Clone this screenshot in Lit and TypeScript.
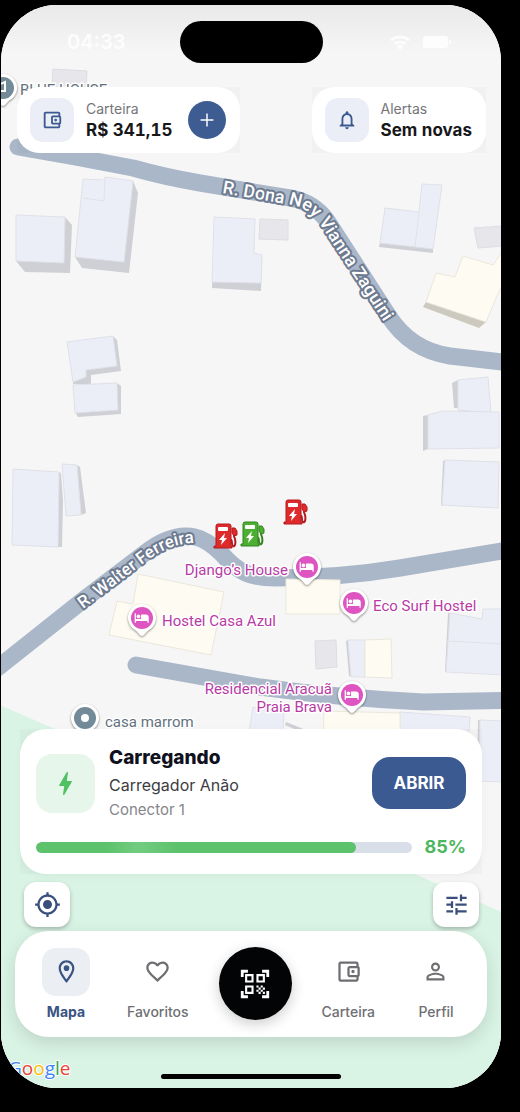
import { LitElement, html, svg, css } from "lit";
import { customElement, property } from "lit/decorators.js";
import { classMap } from "lit/directives/class-map.js";

const ICONS: Record<string, string> = {
  wallet:
    "M21 7.28V5c0-1.1-.9-2-2-2H5c-1.11 0-2 .9-2 2v14c0 1.1.89 2 2 2h14c1.1 0 2-.9 2-2v-2.28c.59-.35 1-.98 1-1.72V9c0-.74-.41-1.37-1-1.72zM20 9v6h-7V9h7zM5 19V5h14v2h-6c-1.1 0-2 .9-2 2v6c0 1.1.9 2 2 2h6v2H5zM16 10.5a1.5 1.5 0 1 1 0 3a1.5 1.5 0 1 1 0-3z",
  bell:
    "M12 22c1.1 0 2-.9 2-2h-4c0 1.1.9 2 2 2zm6-6v-5c0-3.07-1.63-5.64-4.5-6.32V4c0-.83-.67-1.5-1.5-1.5s-1.5.67-1.5 1.5v.68C7.64 5.36 6 7.92 6 11v5l-2 2v1h16v-1l-2-2zm-2 1H8v-6c0-2.48 1.51-4.5 4-4.5s4 2.02 4 4.5v6z",
  plus: "M19 12.800h-6.200v6.200h-1.600v-6.200H5v-1.600h6.200V5h1.600v6.200H19v1.600z",
  pin:
    "M12 2C8.13 2 5 5.13 5 9c0 5.25 7 13 7 13s7-7.75 7-13c0-3.87-3.13-7-7-7zM7 9c0-2.76 2.24-5 5-5s5 2.24 5 5c0 2.88-2.88 7.19-5 9.88C9.92 16.21 7 11.85 7 9zM12 6.5a2.5 2.5 0 1 1 0 5a2.5 2.5 0 1 1 0-5z",
  heart:
    "M16.5 3c-1.74 0-3.41.81-4.5 2.09C10.91 3.81 9.24 3 7.5 3 4.42 3 2 5.42 2 8.5c0 3.78 3.4 6.86 8.55 11.54L12 21.35l1.45-1.32C18.6 15.36 22 12.28 22 8.5 22 5.42 19.58 3 16.5 3zm-4.4 15.55l-.1.1-.1-.1C7.14 14.24 4 11.39 4 8.5 4 6.5 5.5 5 7.5 5c1.54 0 3.04.99 3.57 2.36h1.87C13.46 5.99 14.96 5 16.5 5c2 0 3.5 1.5 3.5 3.5 0 2.89-3.14 5.74-7.9 10.05z",
  qr:
    "M9.5 6.5v3h-3v-3h3M11 5H5v6h6V5zm-1.5 9.5v3h-3v-3h3M11 13H5v6h6v-6zm6.5-6.5v3h-3v-3h3M19 5h-6v6h6V5zm-6 8h1.5v1.5H13V13zm1.5 1.5H16V16h-1.5v-1.5zM16 13h1.5v1.5H16V13zm-3 3h1.5v1.5H13V16zm1.5 1.5H16V19h-1.5v-1.5zM16 16h1.5v1.5H16V16zm1.5-1.5H19V16h-1.5v-1.5zm0 3H19V19h-1.5v-1.5zM22 7h-2V4h-3V2h5v5zm0 15v-5h-2v3h-3v2h5zM2 22h5v-2H4v-3H2v5zM2 2v5h2V4h3V2H2z",
  person:
    "M12 5.9c1.16 0 2.1.94 2.1 2.1s-.94 2.1-2.1 2.1S9.9 9.16 9.9 8s.94-2.1 2.1-2.1m0 9c2.97 0 6.1 1.46 6.1 2.1v1.1H5.9V17c0-.64 3.13-2.1 6.1-2.1M12 4C9.79 4 8 5.79 8 8s1.79 4 4 4 4-1.79 4-4-1.79-4-4-4zm0 9c-2.67 0-8 1.34-8 4v3h16v-3c0-2.66-5.33-4-8-4z",
  locate:
    "M12 8c-2.21 0-4 1.79-4 4s1.79 4 4 4 4-1.79 4-4-1.79-4-4-4zm8.94 3c-.46-4.17-3.77-7.48-7.94-7.94V1h-2v2.06C6.83 3.52 3.52 6.83 3.06 11H1v2h2.06c.46 4.17 3.77 7.48 7.94 7.94V23h2v-2.06c4.17-.46 7.48-3.77 7.94-7.94H23v-2h-2.06zM12 19c-3.87 0-7-3.13-7-7s3.13-7 7-7 7 3.13 7 7-3.13 7-7 7z",
  tune:
    "M3 17v2h6v-2H3zM3 5v2h10V5H3zm10 16v-2h8v-2h-8v-2h-2v6h2zM7 9v2H3v2h4v2h2V9H7zm14 4v-2H11v2h10zm-6-4h2V7h4V5h-4V3h-2v6z",
  bolt:
    "M10.67 21c-.35 0-.62-.31-.57-.66L11 14H7.5c-.88 0-.33-.75-.31-.78 1.26-2.23 3.15-5.53 5.65-9.93.1-.18.3-.29.5-.29.35 0 .62.31.57.66L13 10h3.51c.4 0 .62.19.4.66-3.29 5.74-5.2 9.09-5.75 10.05-.1.18-.29.29-.5.29z",
};

const BED =
  "M7 13c1.66 0 3-1.34 3-3S8.66 7 7 7s-3 1.34-3 3 1.34 3 3 3zm12-6h-8v7H3V5H1v15h2v-3h18v3h2v-9c0-2.21-1.79-4-4-4z";

@customElement("md-icon")
class MdIcon extends LitElement {
  @property() name = "";
  @property({ type: Number }) size = 24;

  static styles = css`
    :host {
      display: flex;
    }
    .glyph {
      display: block;
      fill: currentColor;
    }
  `;

  render() {
    return html`<svg class="glyph" width=${this.size} height=${this.size} viewBox="0 0 24 24" aria-hidden="true">
      <path d=${ICONS[this.name] ?? ""}></path>
    </svg>`;
  }
}

type Roof = { kind: "blue" | "yellow" | "grey"; roof: string; wall?: string };

const BUILDINGS: Roof[] = [
  { kind: "grey", roof: "53,69 87,71 86,90 52,88" },
  { kind: "blue", wall: "65,217 72,225 70,273 25,272 16,261", roof: "16,215 65,217 64,263 16,261" },
  { kind: "blue", wall: "133,181 138,193 129,273 82,268 75,257", roof: "83,179 104,180 105,177 133,181 124,262 75,257 81,199" },
  { kind: "blue", wall: "262,255 261,291 212,288 212,280", roof: "214,217 255,219 254,253 262,255 261,283 212,282" },
  { kind: "grey", roof: "260,219 288,220 288,240 259,239" },
  { kind: "blue", wall: "113,336 117,340 121,371 91,375 91,384 73,384 73,381 86,370", roof: "67,342 113,336 117,366 86,370 86,377 73,382" },
  { kind: "blue", wall: "117,383 121,386 121,414 78,417 75,412", roof: "73,385 117,383 118,410 75,413" },
  { kind: "blue", wall: "380,242 433,248 433,253 379,247", roof: "385,208 419,212 422,184 442,185 433,249 380,243" },
  { kind: "grey", roof: "474,228 503,226 503,246 478,248" },
  { kind: "yellow", wall: "426,302 486,322 479,328 423,307", roof: "463,256 493,265 503,250 503,285 499,291 486,322 426,302 436,273 455,277" },
  { kind: "blue", wall: "458,380 452,383 454,408 458,408", roof: "458,380 488,377 491,413 458,410" },
  { kind: "blue", wall: "428,415 423,416 423,451 428,449", roof: "428,415 442,411 499,412 499,448 428,449" },
  { kind: "blue", wall: "445,460 443,461 441,505 443,506", roof: "445,460 499,462 498,508 442,505" },
  { kind: "blue", wall: "77,465 80,467 86,513 81,515", roof: "62,464 77,465 81,515 66,516" },
  { kind: "blue", wall: "59,472 61,473 63,500 62,547 58,547", roof: "13,469 59,472 58,547 12,545" },
  { kind: "yellow", roof: "138,574 224,592 211,655 109,635 117,601 133,604" },
  { kind: "yellow", roof: "286,579 340,580 340,614 286,614" },
  { kind: "grey", roof: "315,641 336,640 337,667 316,669" },
  { kind: "blue", wall: "348,640 346,641 349,676 351,677", roof: "348,640 365,640 365,677 351,677" },
  { kind: "yellow", roof: "365,640 391,639 392,678 365,677" },
  { kind: "blue", wall: "450,613 448,613 445,672 447,672", roof: "450,613 482,619 483,609 503,609 503,675 446,672" },
  { kind: "blue", roof: "253,707 284,713 282,745 247,745" },
  { kind: "blue", roof: "400,712 470,717 468,745 400,745" },
  { kind: "yellow", roof: "324,711 400,713 400,745 323,745" },
  { kind: "blue", wall: "480,720 478,720 477,782 479,782", roof: "480,720 503,721 503,782 479,781" },
];

const LODGINGS = [
  { x: 307, y: 567 },
  { x: 354, y: 603 },
  { x: 352, y: 695 },
  { x: 142, y: 618 },
];

const LABELS = [
  { x: 288, y: 575, end: true, text: "Django’s House" },
  { x: 162, y: 626, end: false, text: "Hostel Casa Azul" },
  { x: 373, y: 611, end: false, text: "Eco Surf Hostel" },
  { x: 332, y: 694, end: true, text: "Residencial Aracuã" },
  { x: 332, y: 712, end: true, text: "Praia Brava" },
];

const CHARGERS = [
  { x: 213, y: 523, busy: true },
  { x: 240, y: 521, busy: false },
  { x: 283, y: 499, busy: true },
];

@customElement("street-map")
class StreetMap extends LitElement {
  static styles = css`
    :host {
      display: block;
    }
    .canvas {
      display: block;
      width: 100%;
      height: 100%;
      background: #f6f6f6;
    }
    .park {
      fill: #d9f4e4;
    }
    .road {
      fill: none;
      stroke: #a9b7c9;
      stroke-width: 17;
      stroke-linecap: round;
      stroke-linejoin: round;
    }
    .blue {
      fill: #eceef7;
      stroke: #e0e1e8;
    }
    .yellow {
      fill: #fefcf2;
      stroke: #ebe7dc;
    }
    .grey {
      fill: #e7e7eb;
      stroke: #dddde2;
    }
    .wall {
      fill: #cfd0d5;
    }
    .wall-yellow {
      fill: #ccc9be;
    }
    .street {
      font: 500 17px Roboto, "Liberation Sans", sans-serif;
      fill: #fff;
      stroke: #6d7a90;
      stroke-width: 4;
      stroke-linejoin: round;
      paint-order: stroke;
    }
    .avenue {
      font-size: 18px;
    }
    .place {
      font: 400 15px Inter, "Liberation Sans", sans-serif;
      fill: #b93aa6;
      stroke: #fff;
      stroke-width: 3;
      stroke-linejoin: round;
      paint-order: stroke;
    }
    .place {
      font-family: Roboto, "Liberation Sans", sans-serif;
    }
    .muted {
      fill: #63727e;
    }
    .end {
      text-anchor: end;
    }
    .bubble {
      fill: #fff;
      filter: drop-shadow(0 1px 1px rgba(0, 0, 0, 0.45));
    }
    .lodging {
      fill: #de54c1;
    }
    .spot {
      fill: #738b98;
    }
    .white {
      fill: #fff;
    }
    .cap {
      fill: none;
      stroke: #fff;
      stroke-width: 2;
    }
    .pump-red {
      fill: #df2a2c;
      stroke: #b31b20;
    }
    .pump-green {
      fill: #4cae32;
      stroke: #33851f;
    }
    .hose {
      fill: none;
      stroke-width: 2;
      stroke-linecap: round;
    }
    .brand {
      font: 400 19px "Open Sans", "Noto Sans", sans-serif;
      stroke: #fff;
      stroke-width: 2;
      paint-order: stroke;
    }
    .g-blue {
      fill: #4285f4;
    }
    .g-red {
      fill: #ea4335;
    }
    .g-yellow {
      fill: #fbbc05;
    }
    .g-green {
      fill: #34a853;
    }
  `;

  private bubble(x: number, y: number) {
    return svg`<path class="bubble" d="M${x} ${y + 18}c-2 0-3-3-7-6a14 14 0 1 1 14 0c-4 3-5 6-7 6z"></path>`;
  }

  private charger(x: number, y: number, busy: boolean) {
    const tone = busy ? "pump-red" : "pump-green";
    return svg`<g transform="translate(${x} ${y})">
      <path class="${tone} hose" d="M17 17c3-1 1 5 3 6s3-3 2-7l-1-3V7"></path>
      <path class=${tone} d="M19 5l3 0 2 3v4l-3 1-2-3z"></path>
      <path class=${tone} d="M3 23V3q0-2 2-2h11q2 0 2 2v20h1v2H1v-2z"></path>
      <rect class="white" x="5" y="4" width="10" height="4" rx="1"></rect>
      <path class="white" d="M12 10l-6 7h3l-1 5 6-7h-3z"></path>
    </g>`;
  }

  render() {
    return html`<svg class="canvas" viewBox="1 5 500 1083" preserveAspectRatio="xMidYMid slice" role="img" aria-label="Mapa">
      <path class="park" d="M0 705L50 727L417 875L520 920V1100H0z"></path>
      <path class="road" d="M18 147L75 157L133 168Q165 177 200 183L290 198Q314 202 328 222L388 315Q410 350 450 356L520 364"></path>
      <path class="road" d="M136 665L260 687Q340 698 423 702L520 700"></path>
      <path class="road" d="M-10 674L82 601L145 553Q172 532 195 537Q208 540 222 554C238 573 252 578 275 578Q340 578 400 568L520 548"></path>
      ${BUILDINGS.map(
        (b) => svg`
          ${b.wall ? svg`<polygon class=${b.kind === "yellow" ? "wall-yellow" : "wall"} points=${b.wall}></polygon>` : ""}
          <polygon class=${b.kind} points=${b.roof}></polygon>`,
      )}
      <path class="blue" d="M83 198L104 201L105 178M419 212L415 247M447 641L503 644"></path>
      <path class="wall" d="M286 722L306 730V734L285 725z"></path>

      <path id="dona" fill="none" d="M222 193L292 205Q308 208 320 224L386 325L404 350"></path>
      <path id="walter" fill="none" d="M83 609L148 560Q173 541 202 543L222 548"></path>
      <text class="street avenue"><textPath href="#dona">R. Dona Ney Vianna Zaguini</textPath></text>
      <text class="street"><textPath href="#walter">R. Walter Ferreira</textPath></text>

      ${this.bubble(3, 88)}
      <circle class="spot" cx="3" cy="88" r="11"></circle>
      <path class="cap" d="M-4 86l9-4v9h-6"></path>
      <text class="place muted" x="20" y="95">BLUE HOUSE</text>

      ${this.bubble(85, 718)}
      <circle class="spot" cx="85" cy="718" r="11"></circle>
      <circle class="white" cx="85" cy="718" r="4"></circle>
      <text class="place muted" x="105" y="727">casa marrom</text>

      ${LABELS.map((l) => svg`<text class="place ${l.end ? "end" : ""}" x=${l.x} y=${l.y}>${l.text}</text>`)}
      ${LODGINGS.map(
        (p) => svg`${this.bubble(p.x, p.y)}
          <circle class="lodging" cx=${p.x} cy=${p.y} r="11"></circle>
          <path class="white" transform="translate(${p.x - 8} ${p.y - 8}) scale(.64)" d=${BED}></path>`,
      )}
      ${CHARGERS.map((c) => this.charger(c.x, c.y, c.busy))}
      <text class="brand" x="8" y="1075"><tspan class="g-blue">G</tspan><tspan class="g-red">o</tspan><tspan class="g-yellow">o</tspan><tspan class="g-blue">g</tspan><tspan class="g-green">l</tspan><tspan class="g-red">e</tspan></text>
    </svg>`;
  }
}

const TABS_LEFT = [
  { icon: "pin", label: "Mapa", active: true },
  { icon: "heart", label: "Favoritos", active: false },
];
const TABS_RIGHT = [
  { icon: "wallet", label: "Carteira", active: false },
  { icon: "person", label: "Perfil", active: false },
];

@customElement("app-root")
class AppRoot extends LitElement {
  @property({ type: Number }) charge = 85;

  static styles = css`
    :host {
      display: flex;
      box-sizing: border-box;
      min-height: 100vh;
      padding: 5px 19px 24px 1px;
      background: #000;
      font-family: Inter, "Liberation Sans", sans-serif;
      color: #1b1b1f;
    }
    * {
      box-sizing: border-box;
    }
    button {
      border: 0;
      padding: 0;
      font: inherit;
      color: inherit;
      cursor: pointer;
    }
    .phone {
      position: relative;
      flex: 1;
      display: flex;
      flex-direction: column;
      overflow: hidden;
      border-radius: 56px;
      background: #f6f6f6;
    }
    .map {
      position: absolute;
      inset: 0;
    }
    .screen {
      position: relative;
      flex: 1;
      display: flex;
      flex-direction: column;
    }
    .status {
      display: grid;
      grid-template-columns: 1fr auto 1fr;
      align-items: center;
      padding: 16px 0 24px;
      background: linear-gradient(#e9e9e9, rgba(246, 246, 246, 0) 48px);
    }
    .time {
      padding-left: 12px;
      text-align: center;
      font-size: 20px;
      font-weight: 600;
      line-height: 24px;
      color: #fdfdfd;
    }
    .island {
      width: 143px;
      height: 42px;
      border-radius: 21px;
      background: #000;
    }
    .signals {
      display: flex;
      justify-content: center;
      align-items: center;
      gap: 12px;
      padding-left: 16px;
    }
    .signal {
      display: block;
      fill: #fdfdfd;
    }
    .top {
      display: flex;
      justify-content: space-between;
      padding: 0 15px 0 16px;
    }
    .halo {
      background: rgba(0, 0, 0, 0.02);
    }
    .chip {
      display: flex;
      align-items: center;
      gap: 12px;
      padding: 11px 14px 11px 13px;
      border-radius: 22px;
      background: #fff;
    }
    .tile {
      display: flex;
      align-items: center;
      justify-content: center;
      width: 44px;
      height: 44px;
      border-radius: 13px;
      background: #ebeef6;
      color: #3b5a91;
    }
    .amount {
      min-width: 90px;
    }
    .caption {
      font-size: 14px;
      line-height: 20px;
      color: #757579;
    }
    .value {
      font-size: 17px;
      line-height: 22px;
      font-weight: 700;
      font-variant-numeric: tabular-nums;
      color: #17171a;
    }
    .add {
      display: flex;
      align-items: center;
      justify-content: center;
      width: 38px;
      height: 38px;
      border-radius: 50%;
      background: #3d5d92;
      color: #fff;
    }
    .spacer {
      flex: 1;
    }
    .charging {
      margin: 0 19px 8px;
    }
    .session {
      padding: 15px 16px 16px;
      border-radius: 26px;
      background: #fff;
      box-shadow: 0 2px 8px rgba(0, 0, 0, 0.04);
    }
    .summary {
      display: flex;
      align-items: center;
      gap: 14px;
    }
    .badge {
      display: flex;
      align-items: center;
      justify-content: center;
      width: 59px;
      height: 59px;
      border-radius: 16px;
      background: #e6f6eb;
      color: #4fc163;
    }
    .details {
      flex: 1;
    }
    .title {
      margin: 0;
      font-size: 19px;
      line-height: 28px;
      font-weight: 800;
      color: #0f1120;
    }
    .charger {
      font-size: 16px;
      line-height: 26px;
      color: #3c3c42;
    }
    .connector {
      font-size: 15px;
      line-height: 24px;
      color: #85858a;
    }
    .open {
      width: 94px;
      height: 52px;
      border-radius: 18px;
      background: #3b5a91;
      color: #fff;
      font-size: 17px;
      font-weight: 700;
    }
    .progress {
      display: flex;
      align-items: center;
      gap: 12px;
      margin-top: 14px;
    }
    .track {
      flex: 1;
      height: 11px;
      border-radius: 6px;
      overflow: hidden;
      background: #d9dfe9;
    }
    .fill {
      height: 100%;
      border-radius: 6px;
      background: linear-gradient(90deg, #5dc26c 22%, #72cc80 32%, #5dc26c 44%);
    }
    .percent {
      font-size: 18px;
      line-height: 22px;
      font-weight: 700;
      color: #4db75f;
    }
    .tools {
      display: flex;
      justify-content: space-between;
      padding: 0 22px 0 23px;
      margin-bottom: 4px;
    }
    .tool {
      display: flex;
      align-items: center;
      justify-content: center;
      width: 46px;
      height: 45px;
      border-radius: 12px;
      background: #fff;
      color: #3a4f7b;
      box-shadow: 0 2px 4px rgba(0, 0, 0, 0.25);
    }
    .tabs {
      display: flex;
      align-items: center;
      justify-content: space-between;
      margin: 0 14px;
      padding: 16px 20px 17px;
      border-radius: 34px;
      background: #fff;
      box-shadow: 0 6px 18px rgba(0, 0, 0, 0.13);
    }
    .tab {
      display: flex;
      flex-direction: column;
      align-items: center;
      gap: 8px;
      padding: 0 7px;
      font-size: 14px;
      line-height: 16px;
      font-weight: 500;
      color: #6f6f73;
      text-decoration: none;
    }
    .holder {
      display: flex;
      align-items: center;
      justify-content: center;
      width: 48px;
      height: 48px;
      border-radius: 14px;
    }
    .active {
      font-weight: 700;
      color: #3a5484;
    }
    .active .holder {
      background: #ebeff3;
    }
    .scan {
      display: flex;
      align-items: center;
      justify-content: center;
      width: 73px;
      height: 73px;
      border-radius: 50%;
      background: #020405;
      color: #fff;
      box-shadow: 0 4px 14px rgba(0, 0, 0, 0.2);
    }
    .home {
      align-self: center;
      width: 36%;
      height: 5px;
      margin: 37px 0 9px;
      border-radius: 3px;
      background: #000;
    }
  `;

  private tab(t: { icon: string; label: string; active: boolean }) {
    return html`<a class=${classMap({ tab: true, active: t.active })} href="#${t.label.toLowerCase()}">
      <span class="holder"><md-icon name=${t.icon} size="27"></md-icon></span>
      <span>${t.label}</span>
    </a>`;
  }

  render() {
    return html`
      <main class="phone">
        <street-map class="map"></street-map>
        <div class="screen">
          <div class="status">
            <span class="time">04:33</span>
            <span class="island"></span>
            <span class="signals">
              <svg class="signal" width="22" height="16" viewBox="0 0 22 16" aria-hidden="true">
                <path d="M11 16l3.500-3.800a5 5 0 0 0-7 0zM4.500 9l2 2a6.500 6.500 0 0 1 9 0l2-2a9.500 9.500 0 0 0-13 0zM1 5.500l2 2a11.500 11.500 0 0 1 16 0l2-2a14.500 14.500 0 0 0-20 0z"></path>
              </svg>
              <svg class="signal" width="28" height="12" viewBox="0 0 28 12" aria-hidden="true">
                <rect width="25" height="12" rx="3"></rect>
                <rect x="26" y="4" width="2" height="4" rx="1"></rect>
              </svg>
            </span>
          </div>

          <header class="top">
            <div class="halo">
              <section class="chip">
                <span class="tile"><md-icon name="wallet" size="22"></md-icon></span>
                <div class="amount">
                  <div class="caption">Carteira</div>
                  <div class="value">R$ 341,15</div>
                </div>
                <button class="add" aria-label="Adicionar saldo"><md-icon name="plus" size="22"></md-icon></button>
              </section>
            </div>
            <div class="halo">
              <section class="chip">
                <span class="tile"><md-icon name="bell" size="22"></md-icon></span>
                <div class="amount">
                  <div class="caption">Alertas</div>
                  <div class="value">Sem novas</div>
                </div>
              </section>
            </div>
          </header>

          <div class="spacer"></div>

          <div class="charging halo">
            <section class="session">
              <div class="summary">
                <span class="badge"><md-icon name="bolt" size="31"></md-icon></span>
                <div class="details">
                  <h2 class="title">Carregando</h2>
                  <div class="charger">Carregador Anão</div>
                  <div class="connector">Conector 1</div>
                </div>
                <button class="open">ABRIR</button>
              </div>
              <div class="progress">
                <div class="track" role="progressbar" aria-label="Carga" aria-valuenow=${this.charge} aria-valuemin="0" aria-valuemax="100">
                  <div class="fill" style="width: ${this.charge}%"></div>
                </div>
                <span class="percent">${this.charge}%</span>
              </div>
            </section>
          </div>

          <div class="tools">
            <button class="tool" aria-label="Minha localização"><md-icon name="locate" size="27"></md-icon></button>
            <button class="tool" aria-label="Filtros"><md-icon name="tune" size="27"></md-icon></button>
          </div>

          <nav class="tabs">
            ${TABS_LEFT.map((t) => this.tab(t))}
            <button class="scan" aria-label="Ler QR code"><md-icon name="qr" size="34"></md-icon></button>
            ${TABS_RIGHT.map((t) => this.tab(t))}
          </nav>

          <div class="home"></div>
        </div>
      </main>
    `;
  }
}
